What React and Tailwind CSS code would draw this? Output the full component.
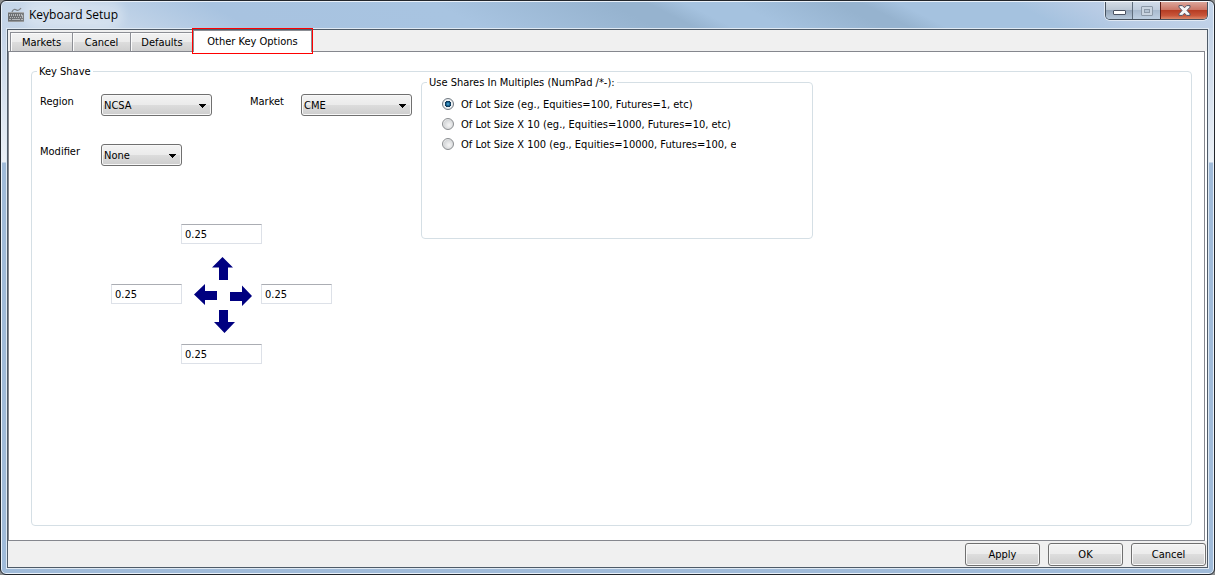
import { useId, useState } from "react";

const TABS = [
  { name: "Markets", width: "w-[62px]" },
  { name: "Cancel", width: "w-[58px]" },
  { name: "Defaults", width: "w-[63px]" },
  { name: "Other Key Options", width: "w-[119px]" },
];

const MULTIPLES = [
  "Of Lot Size (eg., Equities=100, Futures=1, etc)",
  "Of Lot Size X 10 (eg., Equities=1000, Futures=10, etc)",
  "Of Lot Size X 100 (eg., Equities=10000, Futures=100, etc)",
];

function KeyboardIcon() {
  return (
    <svg width="16" height="16" viewBox="0 0 16 16" aria-hidden="true">
      <path d="M4 5 C5 2 7 2 8.500 3 S11.500 3.200 13 1" fill="none" stroke="#7d8287" strokeWidth="1.300" />
      <rect x="0" y="5" width="16" height="10" fill="#6c6f72" />
      <rect x="0" y="5" width="16" height="1" fill="#a3a6a9" />
      <g fill="#b4b7ba">
        <path d="M1 7h1v2h-1zM3 7h1v2h-1zM5 7h1v2h-1zM7 7h1v2h-1zM9 7h1v2h-1zM11 7h1v2h-1zM13 7h1v2h-1z" />
        <path d="M2 10h1v1h-1zM4 10h1v1h-1zM6 10h1v1h-1zM8 10h1v1h-1zM10 10h1v1h-1zM12 10h1v1h-1zM14 8h1v3h-1z" />
        <path d="M1 12h2v1h-2zM4 12h8v1h-8zM13 12h2v1h-2z" />
      </g>
      <rect x="0" y="14" width="16" height="1" fill="#94979a" />
    </svg>
  );
}

function CaptionButtons() {
  return (
    <div className="flex h-[18px] overflow-hidden rounded-b-[5px] border border-t-0 border-[#46525f] shadow-[0_0_0_1px_rgba(255,255,255,0.55)]">
      <button aria-label="Minimize" className="flex w-[27px] items-center justify-center border-r border-[#5f6d7c] bg-[linear-gradient(#d3dbe5_0%,#bcc7d4_45%,#94a5b9_50%,#b7c8da_100%)] pt-1">
        <svg width="13" height="5" viewBox="0 0 13 5" aria-hidden="true">
          <rect x="0.5" y="0.5" width="12" height="4" rx="0.5" fill="#fff" stroke="#4b5261" />
        </svg>
      </button>
      <button aria-label="Maximize" disabled className="flex w-[27px] items-center justify-center bg-[linear-gradient(#d0dbe8_0%,#c0cddd_45%,#a9bbcf_50%,#bfd0e2_100%)]">
        <svg width="12" height="10" viewBox="0 0 12 10" aria-hidden="true">
          <rect x="0.5" y="0.5" width="11" height="9" rx="0.5" fill="#c9d4e0" stroke="#8c99a8" />
          <rect x="3.5" y="3.5" width="5" height="3" fill="#b3c2d2" stroke="#8c99a8" />
        </svg>
      </button>
      <button aria-label="Close" className="flex w-[47px] items-center justify-center border-l border-[#5c1d18] bg-[linear-gradient(#dba59a_0%,#cb7666_45%,#b63d24_50%,#c8563a_80%,#dc8a6c_100%)]">
        <svg width="13" height="11" viewBox="0 0 13 11" aria-hidden="true">
          <path d="M1 .6h3.4l2.1 2.2L8.6.6H12v1.6L9 5.5l3 3.3v1.6H8.6L6.5 8.2l-2.1 2.2H1V8.8l3-3.3-3-3.3z" fill="#f6f6f6" stroke="#505264" strokeWidth="1" />
        </svg>
      </button>
    </div>
  );
}

function Tab({ name, width, selected, onSelect }) {
  if (selected) {
    return (
      <button role="tab" aria-selected="true" onClick={onSelect}
        className={`relative -mb-px h-[22px] border border-b-0 border-[#8c8e94] bg-white pb-px ${width}`}>
        {name}
        <span className="absolute -inset-x-[2px] -top-[3px] -bottom-[2px] border border-[#ff0000]" />
      </button>
    );
  }
  return (
    <button role="tab" aria-selected="false" onClick={onSelect}
      className={`h-[19px] border border-r-0 border-b-0 border-[#8c8e94] bg-[linear-gradient(#f2f2f2_0%,#ebebeb_50%,#dddddd_50%,#cfcfcf_100%)] shadow-[inset_1px_1px_0_#fbfbfb] ${width}`}>
      {name}
    </button>
  );
}

function Dropdown({ label, options, width }) {
  const id = useId();
  return (
    <>
      <label htmlFor={id} className="leading-4">{label}</label>
      <div className={`relative ${width}`}>
        <select id={id}
          className="block h-[22px] w-full appearance-none rounded-[3px] border border-[#707070] bg-[linear-gradient(#f3f3f3_0%,#ebebeb_50%,#dddddd_50%,#cdcdcd_100%)] pr-5 pl-[2px] text-black shadow-[inset_0_0_0_1px_#f8f8f8]">
          {options.map((option) => <option key={option}>{option}</option>)}
        </select>
        <svg width="7" height="4" viewBox="0 0 7 4" aria-hidden="true" className="pointer-events-none absolute top-[10px] right-1.5">
          <path d="M0 0h7v1h-1v1h-1v1h-1v1h-1v-1h-1v-1h-1v-1h-1z" fill="#000" />
        </svg>
      </div>
    </>
  );
}

function StepInput({ label, className }) {
  return (
    <input aria-label={label} defaultValue="0.25"
      className={`h-5 border border-[#dde1e8] border-t-[#abadb3] bg-white pl-[3px] text-black ${className}`} />
  );
}

function Arrows() {
  return (
    <svg width="79" height="100" viewBox="0 0 79 100" fill="#000080" aria-hidden="true" className="place-self-center">
      <path d="M40.5 13 L51 23.5 H46 V36 H37 V23.5 H30 Z" />
      <path d="M12 50.5 L23 40 V47 H35 V56 H23 V61 Z" />
      <path d="M70 52 L60 41.5 V48 H48 V57 H60 V62 Z" />
      <path d="M42.5 89 L53 78 H46 V66 H37 V78 H32 Z" />
    </svg>
  );
}

export default function App() {
  const [tab, setTab] = useState("Other Key Options");
  const [multiple, setMultiple] = useState(0);
  return (
    <div className="flex min-h-screen bg-[#8d8f90] font-['DejaVu_Sans_Condensed','DejaVu_Sans',sans-serif] text-[11px] leading-[13px] text-black">
      <div className="flex grow flex-col overflow-hidden rounded-[6px] border border-[#22262c] bg-[linear-gradient(to_bottom,#c3d3e7_27px,#ebf0f6_161px,#a0bbd9_162px)] shadow-[inset_0_0_0_1px_#eaf1f9]">
        <header className="mx-px mt-px flex h-[26px] items-start justify-between rounded-t-[4px] bg-[linear-gradient(27deg,#c3d4e8_0%,#c8d8ea_8%,#a8c3e0_20%,#a8c4e1_38%,#96b3cf_52%,#96b3cf_55%,#a5c2df_58%,#a5c2df_62%,#96b3cf_70%,#96b3cf_72%,#a5c2df_75%,#a5c2df_84%,#b9cce5_90%,#c3d4e9_100%)] pr-[5px] pl-1.5">
          <h1 className="flex items-center gap-[5px] pt-1 font-['Open_Sans',sans-serif] text-xs leading-[18px]">
            <KeyboardIcon />
            <span className="rounded-full bg-white/25 shadow-[0_0_8px_6px_rgba(255,255,255,0.25)]">Keyboard Setup</span>
          </h1>
          <CaptionButtons />
        </header>

        <div className="mx-[5px] mb-[5px] flex grow flex-col border border-[#dfe9f3]">
          <div className="flex grow flex-col border border-[#4f5b68] bg-[#f0f0f0]">
            <nav role="tablist" className="flex h-[21px] items-end pl-[2px]">
              {TABS.map(({ name, width }) => (
                <Tab key={name} name={name} width={width} selected={tab === name} onSelect={() => setTab(name)} />
              ))}
            </nav>

            <main className="flex grow bg-white pr-[2px]">
              <div className="flex grow border border-[#85878e] bg-white pr-3 pb-3.5 pl-[22px]">
                <fieldset className="mt-3.5 flex min-w-0 grow items-start rounded-[4px] border border-[#d5dfe5]">
                  <legend className="ml-[5px] px-[2px] leading-none">Key Shave</legend>
                  <div className="flex items-start">
                    <div className="w-[389px] shrink-0 pt-[17px] pl-2">
                      <div className="grid grid-cols-[61px_149px_51px_111px] items-start gap-y-7">
                        <Dropdown label="Region" options={["NCSA"]} width="w-[111px]" />
                        <Dropdown label="Market" options={["CME"]} width="w-[111px]" />
                        <Dropdown label="Modifier" options={["None"]} width="w-[81px]" />
                      </div>
                      <div className="mt-[58px] ml-[71px] grid grid-cols-[71px_79px_71px] items-center justify-items-center">
                        <StepInput label="Up" className="col-start-2 -mx-px w-[81px]" />
                        <StepInput label="Left" className="col-start-1 w-[71px]" />
                        <Arrows />
                        <StepInput label="Right" className="w-[71px]" />
                        <StepInput label="Down" className="col-start-2 -mx-px w-[81px]" />
                      </div>
                    </div>

                    <fieldset className="h-[162px] w-[392px] shrink-0 rounded-[4px] border border-[#d5dfe5] px-5 pt-1.5">
                      <legend className="-ml-[15px] px-[2px] leading-none">Use Shares In Multiples (NumPad /*-):</legend>
                      {MULTIPLES.map((text, index) => (
                        <label key={text} className="flex h-5 w-[294px] items-center gap-[7px] overflow-hidden whitespace-nowrap">
                          <input type="radio" name="multiple" checked={multiple === index} onChange={() => setMultiple(index)}
                            className="size-3 shrink-0 appearance-none rounded-full border border-[#8a8d90] bg-[radial-gradient(circle_at_60%_60%,#f6f6f6_0%,#d5d7d9_60%,#f4f4f4_75%)] checked:border-[#707880] checked:bg-[radial-gradient(circle_at_center,#5cb4dd_0%,#15608f_25%,#0d2f4c_42%,#eef2f4_50%,#d9dee2_100%)]" />
                          <span>{text}</span>
                        </label>
                      ))}
                    </fieldset>
                  </div>
                </fieldset>
              </div>
            </main>

            <footer className="flex h-[26px] items-center justify-end gap-2 pt-px pr-px">
              {["Apply", "OK", "Cancel"].map((name) => (
                <button key={name}
                  className="h-[23px] w-[75px] rounded-[3px] border border-[#707070] bg-[linear-gradient(#f3f3f3_0%,#ebebeb_50%,#dddddd_50%,#cdcdcd_100%)] shadow-[inset_0_0_0_1px_#f8f8f8]">
                  {name}
                </button>
              ))}
            </footer>
          </div>
        </div>
      </div>
    </div>
  );
}
